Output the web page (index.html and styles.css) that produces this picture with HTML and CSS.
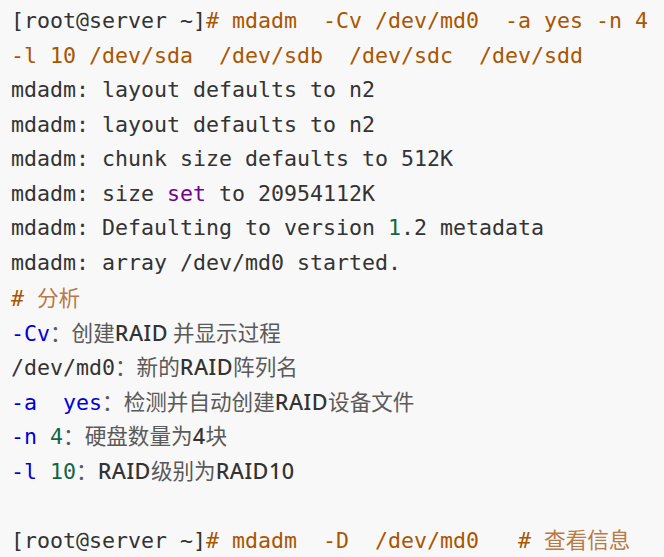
FILE: index.html
```html
<!DOCTYPE html>
<html lang="zh">
<head>
<meta charset="utf-8">
<title>mdadm</title>
<link rel="stylesheet" href="styles.css">
</head>
<body>
<div class="code">
  <div class="line">[root@server ~]<span class="cm"># mdadm  -Cv /dev/md0  -a yes -n 4</span></div>
  <div class="line"><span class="cm">-l 10 /dev/sda  /dev/sdb  /dev/sdc  /dev/sdd</span></div>
  <div class="line">mdadm: layout defaults to n2</div>
  <div class="line">mdadm: layout defaults to n2</div>
  <div class="line">mdadm: chunk size defaults to 512K</div>
  <div class="line">mdadm: size <span class="kw">set</span> to 20954112K</div>
  <div class="line">mdadm: Defaulting to version <span class="num">1</span>.2 metadata</div>
  <div class="line">mdadm: array /dev/md0 started.</div>
  <div class="line"><span class="cm"># <span class="zh">分析</span></span></div>
  <div class="line"><span class="opt">-Cv</span><span class="zh">：创建<b>RAID</b> 并显示过程</span></div>
  <div class="line">/dev/md0<span class="zh">：新的<b>RAID</b>阵列名</span></div>
  <div class="line"><span class="opt">-a</span>  <span class="opt">yes</span><span class="zh">：检测并自动创建<b>RAID</b>设备文件</span></div>
  <div class="line"><span class="opt">-n</span> <span class="num">4</span><span class="zh">：硬盘数量为<b>4</b>块</span></div>
  <div class="line"><span class="opt">-l</span> <span class="num">10</span><span class="zh">：<b>RAID</b>级别为<b>RAID10</b></span></div>
  <div class="line"> </div>
  <div class="line">[root@server ~]<span class="cm"># mdadm  -D  /dev/md0   # <span class="zh">查看信息</span></span></div>
</div>
</body>
</html>
```

FILE: styles.css
```css
html, body {
  margin: 0;
  padding: 0;
  background: #f8f8f8;
}

.code {
  padding: 4px 11px;
  font-family: "DejaVu Sans Mono", "Liberation Mono", "Noto Sans CJK SC", monospace;
  font-size: 21.6px;
  line-height: 34.5px;
  color: #333333;
  background: #f8f8f8;
}

.line {
  display: block;
  height: 34.5px;
  white-space: pre;
}

.cm {
  color: #aa5500;
}

.kw {
  color: #770088;
}

.num {
  color: #116644;
}

.opt {
  color: #0000dd;
}

.zh {
  font-family: "Noto Sans CJK SC", "Noto Sans", sans-serif;
  color: #5a5a5a;
}

.cm .zh {
  color: #b97a45;
}

.zh b {
  font-family: "Noto Sans", "Open Sans", sans-serif;
  font-weight: 500;
  letter-spacing: 0.5px;
  color: #333333;
}
```
